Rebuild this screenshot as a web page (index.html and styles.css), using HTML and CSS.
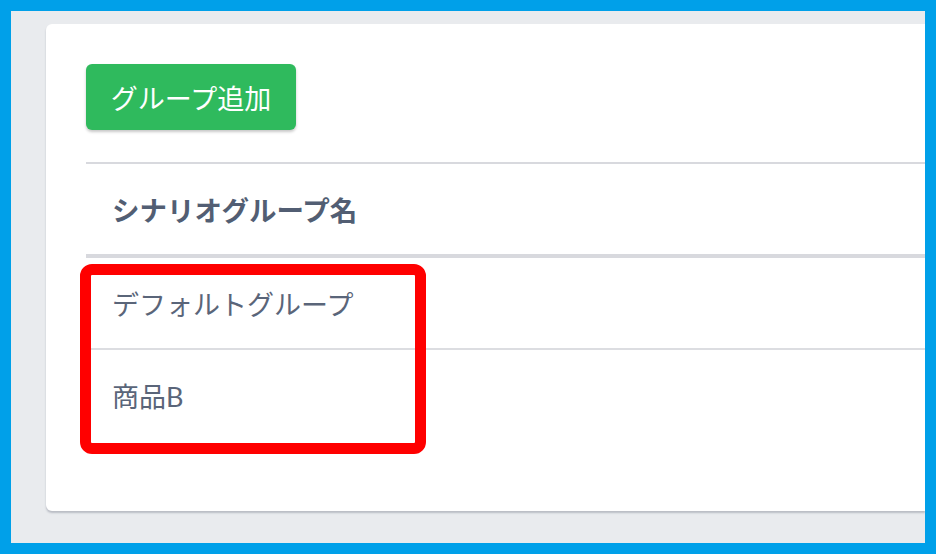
FILE: index.html
```html
<!DOCTYPE html>
<html lang="ja">
<head>
<meta charset="utf-8">
<link rel="stylesheet" href="styles.css">
</head>
<body>
<div class="frame">
  <div class="card">
    <button class="btn">グループ追加</button>
    <div class="table">
      <div class="th">シナリオグループ名</div>
      <div class="td first">デフォルトグループ</div>
      <div class="td">商品B</div>
    </div>
  </div>
  <div class="highlight"></div>
</div>
</body>
</html>
```
FILE: styles.css
```css
html, body {
  margin: 0;
  padding: 0;
}
body {
  font-family: "Lato", "Noto Sans CJK JP", sans-serif;
}
.frame {
  position: relative;
  box-sizing: border-box;
  width: 936px;
  height: 554px;
  border: 11px solid #00a0e9;
  background: #e9ebee;
  padding: 13px 0 0 35px;
  overflow: hidden;
}
.card {
  box-sizing: border-box;
  height: 487px;
  background: #fff;
  border-radius: 6px 0 0 6px;
  padding: 40px 0 0 40px;
  box-shadow: 0 2px 2px rgba(60, 70, 90, 0.28);
}
.btn {
  display: flex;
  align-items: center;
  justify-content: center;
  width: 210px;
  height: 66px;
  padding: 0;
  border: none;
  border-radius: 6px;
  background: #2fba5d;
  color: #fff;
  font-family: "Lato", "Noto Sans CJK JP", sans-serif;
  font-size: 27px;
  font-weight: 400;
  box-shadow: 0 2px 3px rgba(0, 0, 0, 0.22);
}
.table {
  margin-top: 32px;
  border-top: 2px solid #d8d9de;
}
.th, .td {
  display: flex;
  align-items: center;
  box-sizing: border-box;
  padding-left: 26px;
  font-size: 27px;
}
.th {
  height: 94px;
  border-bottom: 4px solid #d8d9de;
  font-size: 27.5px;
  font-weight: 700;
  color: #525e73;
}
.td {
  height: 90px;
  color: #5a6579;
  font-weight: 400;
}
.td.first {
  height: 92px;
  border-bottom: 2px solid #dcdde1;
}
.highlight {
  position: absolute;
  left: 69px;
  top: 253px;
  width: 346px;
  height: 190px;
  box-sizing: border-box;
  border: 11px solid #ff0000;
  border-radius: 12px;
}
```
